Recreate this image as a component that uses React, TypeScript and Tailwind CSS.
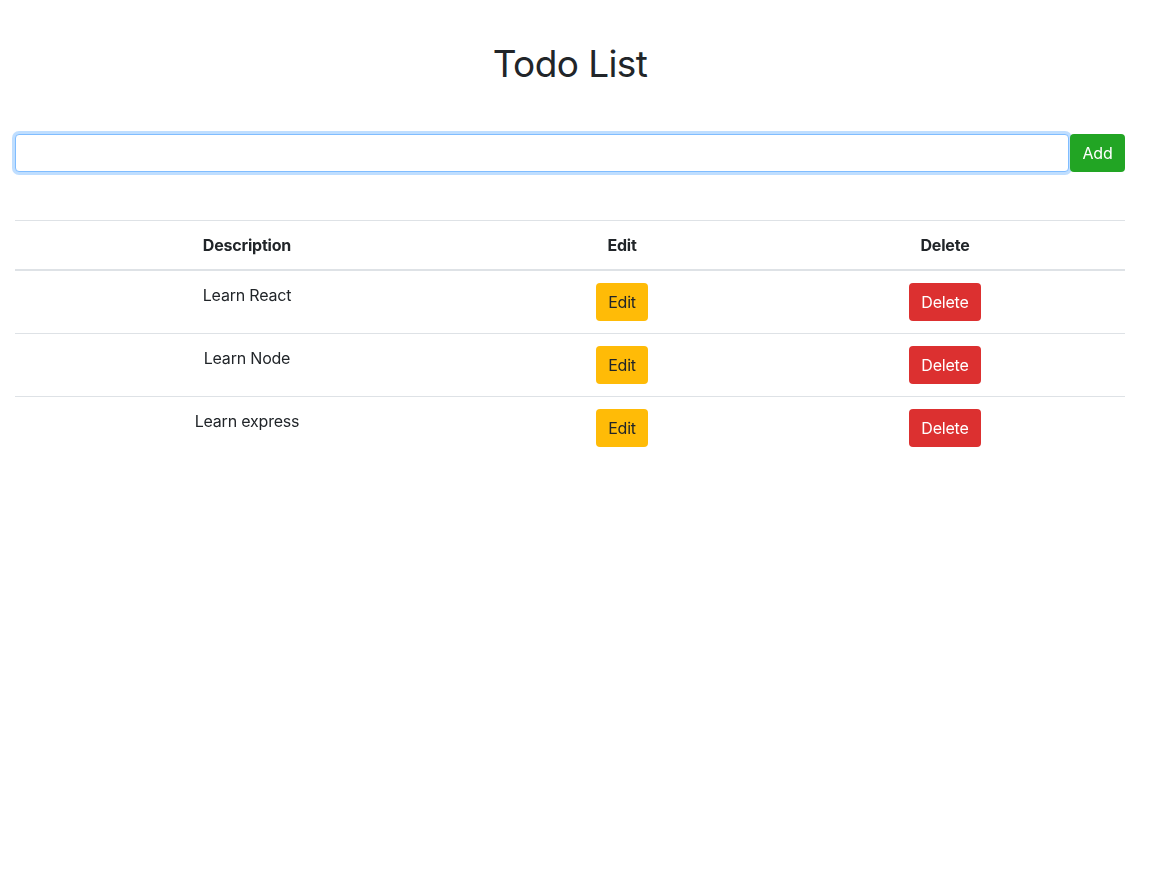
import React from 'react';

const todos = ['Learn React', 'Learn Node', 'Learn express'];

export default function App() {
  return (
    <div className="min-h-[892px] bg-white text-[#212529]" style={{ fontFamily: 'Inter, "Noto Sans", sans-serif' }}>
      <div className="w-[1140px] px-[15px] pt-[40px]">
        <h1 className="text-center text-[37px] font-normal leading-[48px] tracking-[-0.6px]">Todo List</h1>

        <div className="mt-[46px] flex">
          <input
            className="h-[38px] flex-1 rounded-[4px] border border-[#80bdff] bg-white px-3 text-base outline-none shadow-[0_0_0_3px_rgba(0,123,255,0.25)]"
            autoFocus
          />
          <button className="ml-[1px] h-[38px] w-[55px] rounded-[4px] bg-[#22a524] text-base tracking-[-0.2px] text-white">Add</button>
        </div>

        <div className="mt-[48px] border-t border-[#dee2e6] tracking-[-0.2px]">
          <div className="grid grid-cols-[464px_286px_360px] border-b-2 border-[#dee2e6] text-center font-bold">
            <div className="py-[12px] leading-6">Description</div>
            <div className="py-[12px] leading-6">Edit</div>
            <div className="py-[12px] leading-6">Delete</div>
          </div>
          {todos.map((t, i) => (
            <div
              key={t}
              className={`grid grid-cols-[464px_286px_360px] text-center ${i > 0 ? 'border-t border-[#dee2e6]' : ''}`}
            >
              <div className="p-[12px] leading-6">{t}</div>
              <div className="p-[12px]">
                <button className="h-[38px] rounded-[4px] bg-[#ffbb07] px-[12px] leading-6">Edit</button>
              </div>
              <div className="p-[12px]">
                <button className="h-[38px] rounded-[4px] bg-[#dc3030] px-[12px] leading-6 text-white">Delete</button>
              </div>
            </div>
          ))}
        </div>
      </div>
    </div>
  );
}
